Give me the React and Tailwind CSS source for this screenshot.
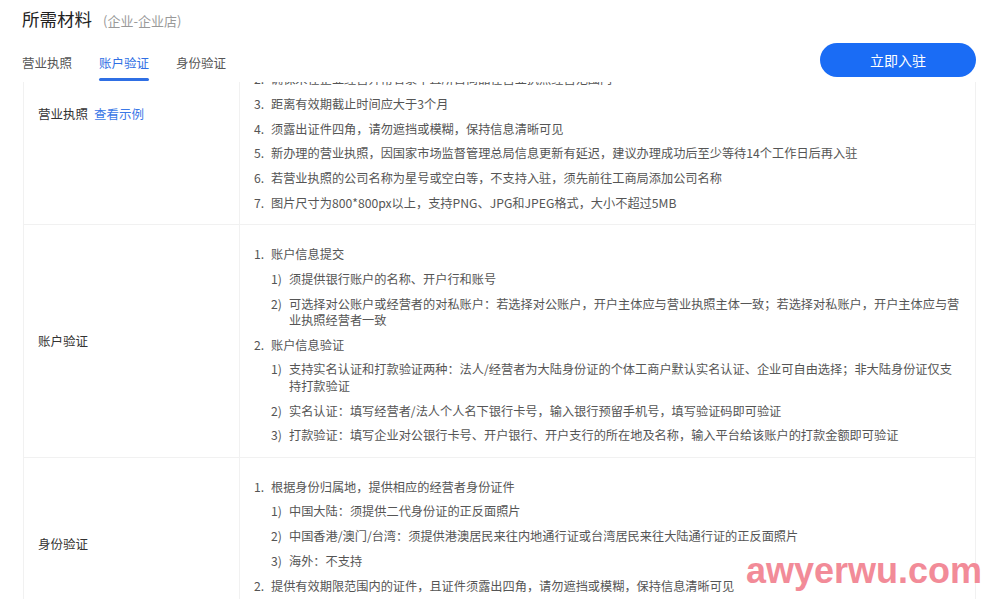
import React from "react";

const FONT = { fontFamily: '"Noto Sans CJK SC", "Noto Sans", sans-serif' };

const rows = [
  {
    label: "营业执照",
    link: "查看示例",
    items: [
      { n: "1.", t: "需提供三证合一的营业执照原件扫描件或加盖公司公章的营业执照复印件，且须为彩色照片或扫描件，不支持黑白复印件，营业执照主体需与入驻主体一致" },
      { n: "2.", t: "确保未在企业经营异常名录中且所售商品在营业执照经营范围内" },
      { n: "3.", t: "距离有效期截止时间应大于3个月" },
      { n: "4.", t: "须露出证件四角，请勿遮挡或模糊，保持信息清晰可见" },
      { n: "5.", t: "新办理的营业执照，因国家市场监督管理总局信息更新有延迟，建议办理成功后至少等待14个工作日后再入驻" },
      { n: "6.", t: "若营业执照的公司名称为星号或空白等，不支持入驻，须先前往工商局添加公司名称" },
      { n: "7.", t: "图片尺寸为800*800px以上，支持PNG、JPG和JPEG格式，大小不超过5MB" },
    ],
  },
  {
    label: "账户验证",
    items: [
      { n: "1.", t: "账户信息提交" },
      { n: "1)", t: "须提供银行账户的名称、开户行和账号", sub: true },
      { n: "2)", t: "可选择对公账户或经营者的对私账户：若选择对公账户，开户主体应与营业执照主体一致；若选择对私账户，开户主体应与营业执照经营者一致", sub: true },
      { n: "2.", t: "账户信息验证" },
      { n: "1)", t: "支持实名认证和打款验证两种：法人/经营者为大陆身份证的个体工商户默认实名认证、企业可自由选择；非大陆身份证仅支持打款验证", sub: true },
      { n: "2)", t: "实名认证：填写经营者/法人个人名下银行卡号，输入银行预留手机号，填写验证码即可验证", sub: true },
      { n: "3)", t: "打款验证：填写企业对公银行卡号、开户银行、开户支行的所在地及名称，输入平台给该账户的打款金额即可验证", sub: true },
    ],
  },
  {
    label: "身份验证",
    items: [
      { n: "1.", t: "根据身份归属地，提供相应的经营者身份证件" },
      { n: "1)", t: "中国大陆：须提供二代身份证的正反面照片", sub: true },
      { n: "2)", t: "中国香港/澳门/台湾：须提供港澳居民来往内地通行证或台湾居民来往大陆通行证的正反面照片", sub: true },
      { n: "3)", t: "海外：不支持", sub: true },
      { n: "2.", t: "提供有效期限范围内的证件，且证件须露出四角，请勿遮挡或模糊，保持信息清晰可见" },
      { n: "3.", t: "图片尺寸为800*800px以上，支持PNG、JPG和JPEG格式，大小不超过5MB" },
    ],
  },
];

function Row({ row, first, last }) {
  return (
    <div className={"flex " + (last ? "" : "border-b border-[#f1f1f1]")}>
      <div
        className={
          "w-[216px] shrink-0 border-r border-[#f1f1f1] pl-[14px] flex items-center text-[12.5px] text-[#333] " +
          (first ? "pb-[4px]" : "")
        }
      >
        <span>{row.label}</span>
        {row.link && <span className="ml-[6px] text-[#3b78e7]">{row.link}</span>}
      </div>
      <div className="flex-1 pl-[14px] pr-[15px] pt-[21px] pb-[13px] flex flex-col gap-[8.2px] text-[12.2px] leading-[16.5px] text-[#555]">
        {row.items.map((it, i) => (
          <div key={i} className={"flex " + (it.sub ? "pl-[17px]" : "")}>
            <span className={it.sub ? "w-[18px] shrink-0" : "w-[17px] shrink-0"}>{it.n}</span>
            <span className="flex-1">{it.t}</span>
          </div>
        ))}
      </div>
    </div>
  );
}

export default function App() {
  return (
    <div className="relative h-[599px] w-[1000px] overflow-hidden bg-white" style={FONT}>
      <div className="pt-[8px] pl-[23px] w-[976px]">
        <div className="border-x border-t border-[#f1f1f1]">
          {rows.map((r, i) => (
            <Row key={i} row={r} first={i === 0} last={i === rows.length - 1} />
          ))}
        </div>
      </div>

      <div className="absolute inset-x-0 top-0 h-[82px] bg-white px-[22px] pt-[9px]">
        <div className="flex items-baseline leading-[20px]">
          <span className="text-[17.5px] text-[#222]">所需材料</span>
          <span className="ml-[11px] text-[13px] text-[#999]">(企业-企业店)</span>
        </div>
        <div className="flex justify-between h-[44px] mt-[9px] pr-[2px]">
          <div className="flex gap-[27px] pt-[15px] text-[12.5px] leading-[16px]">
            <div className="text-[#555]">营业执照</div>
            <div className="flex flex-col items-stretch text-[#2f6fe4]">
              <span>账户验证</span>
              <span className="mt-[7px] h-[3px] rounded-full bg-[#2f6fe4]" />
            </div>
            <div className="text-[#555]">身份验证</div>
          </div>
          <button className="mt-[3px] h-[34px] w-[156px] rounded-full bg-[#1a6cf5] text-white text-[14px]">
            立即入驻
          </button>
        </div>
      </div>

      <div
        className="absolute right-[18px] bottom-[10px] text-[36px] font-bold leading-none text-[#f28b98]"
        style={{ fontFamily: '"Liberation Sans", Arial, sans-serif' }}
      >
        awyerwu.com
      </div>
    </div>
  );
}
